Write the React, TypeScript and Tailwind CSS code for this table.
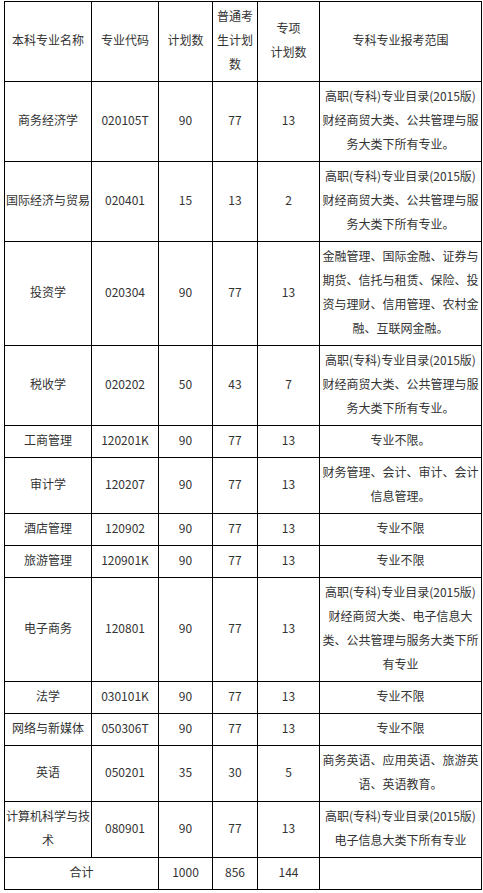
import React from "react"

type Row = {
  name: React.ReactNode
  code: string
  plan: string
  normal: string
  special: string
  scope: string
}

const rows: Row[] = [
  { name: "商务经济学", code: "020105T", plan: "90", normal: "77", special: "13", scope: "高职(专科)专业目录(2015版)财经商贸大类、公共管理与服务大类下所有专业。" },
  { name: "国际经济与贸易", code: "020401", plan: "15", normal: "13", special: "2", scope: "高职(专科)专业目录(2015版)财经商贸大类、公共管理与服务大类下所有专业。" },
  { name: "投资学", code: "020304", plan: "90", normal: "77", special: "13", scope: "金融管理、国际金融、证券与期货、信托与租赁、保险、投资与理财、信用管理、农村金融、互联网金融。" },
  { name: "税收学", code: "020202", plan: "50", normal: "43", special: "7", scope: "高职(专科)专业目录(2015版)财经商贸大类、公共管理与服务大类下所有专业。" },
  { name: "工商管理", code: "120201K", plan: "90", normal: "77", special: "13", scope: "专业不限。" },
  { name: "审计学", code: "120207", plan: "90", normal: "77", special: "13", scope: "财务管理、会计、审计、会计信息管理。" },
  { name: "酒店管理", code: "120902", plan: "90", normal: "77", special: "13", scope: "专业不限" },
  { name: "旅游管理", code: "120901K", plan: "90", normal: "77", special: "13", scope: "专业不限" },
  { name: "电子商务", code: "120801", plan: "90", normal: "77", special: "13", scope: "高职(专科)专业目录(2015版)财经商贸大类、电子信息大类、公共管理与服务大类下所有专业" },
  { name: "法学", code: "030101K", plan: "90", normal: "77", special: "13", scope: "专业不限" },
  { name: "网络与新媒体", code: "050306T", plan: "90", normal: "77", special: "13", scope: "专业不限" },
  { name: "英语", code: "050201", plan: "35", normal: "30", special: "5", scope: "商务英语、应用英语、旅游英语、英语教育。" },
  { name: "计算机科学与技术", code: "080901", plan: "90", normal: "77", special: "13", scope: "高职(专科)专业目录(2015版)电子信息大类下所有专业" },
]

const cell = "border border-black px-[1px] pt-[2px] pb-[5px] text-center align-middle"

export default function App() {
  return (
    <div className="bg-white min-h-[893px] pl-[4px] pt-[1px]">
      <table
        className="table-fixed border-collapse w-[477px] text-[12px] leading-[24px] text-[#333]"
        style={{ fontFamily: '"Noto Sans CJK SC", "Noto Sans", sans-serif' }}
      >
        <colgroup>
          <col className="w-[87px]" />
          <col className="w-[67px]" />
          <col className="w-[54px]" />
          <col className="w-[45px]" />
          <col className="w-[62px]" />
          <col className="w-[162px]" />
        </colgroup>
        <thead>
          <tr>
            <th className={`${cell} font-normal`}>本科专业名称</th>
            <th className={`${cell} font-normal`}>专业代码</th>
            <th className={`${cell} font-normal`}>计划数</th>
            <th className={`${cell} font-normal`}>普通考生计划数</th>
            <th className={`${cell} font-normal`}>
              专项
              <br />
              计划数
            </th>
            <th className={`${cell} font-normal`}>专科专业报考范围</th>
          </tr>
        </thead>
        <tbody>
          {rows.map((r) => (
            <tr key={r.code}>
              <td className={cell}>{r.name}</td>
              <td className={cell}>{r.code}</td>
              <td className={cell}>{r.plan}</td>
              <td className={cell}>{r.normal}</td>
              <td className={cell}>{r.special}</td>
              <td className={cell}>{r.scope}</td>
            </tr>
          ))}
          <tr>
            <td className={cell} colSpan={2}>合计</td>
            <td className={cell}>1000</td>
            <td className={cell}>856</td>
            <td className={cell}>144</td>
            <td className={cell}></td>
          </tr>
        </tbody>
      </table>
    </div>
  )
}
